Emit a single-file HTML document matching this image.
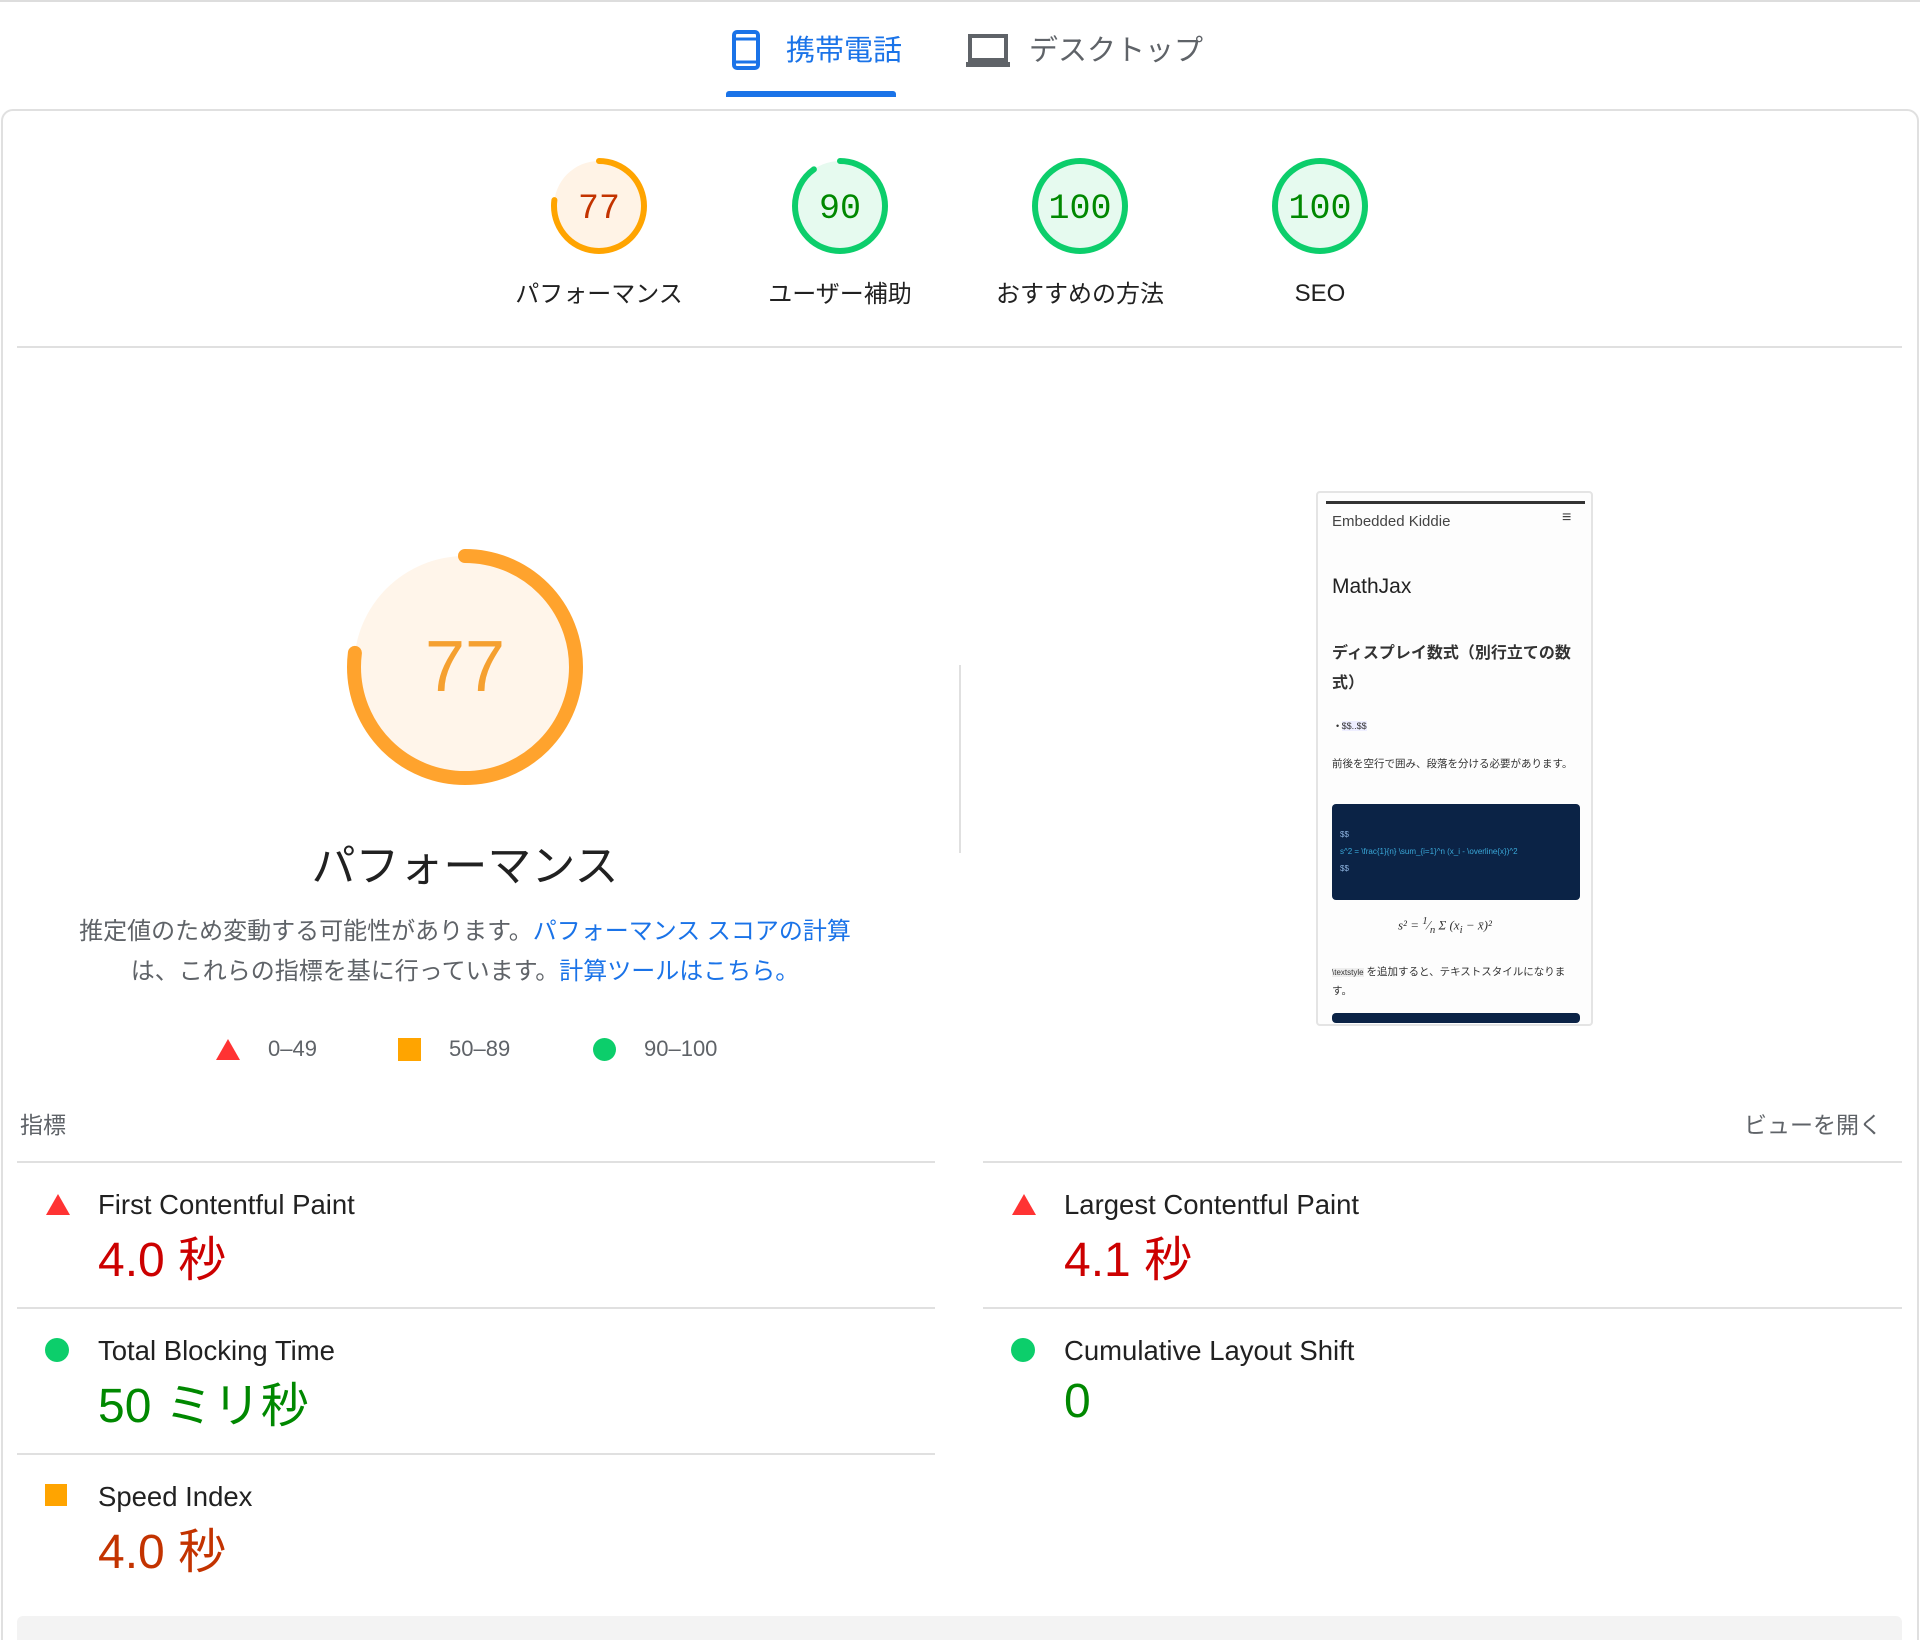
<!DOCTYPE html>
<html style="height:1640px;overflow:hidden"><head><meta charset="utf-8"><style>
*{margin:0;padding:0;box-sizing:border-box}
body{width:1920px;height:1640px;background:#fff;position:relative;overflow:hidden;font-family:"Liberation Sans","Noto Sans CJK JP",sans-serif;color:#212121}
.a{position:absolute;white-space:nowrap}
.c{transform:translateX(-50%)}
</style></head><body>
<div class="a" style="left:0;top:0;width:1920px;height:2px;background:#ddd"></div>
<!-- tabs -->
<svg class="a" style="left:731px;top:29px" width="30" height="42" viewBox="0 0 30 42"><rect x="3" y="3" width="24" height="36" rx="3" fill="none" stroke="#1a73e8" stroke-width="4"/><line x1="3" y1="10" x2="27" y2="10" stroke="#1a73e8" stroke-width="3"/><line x1="3" y1="33" x2="27" y2="33" stroke="#1a73e8" stroke-width="3"/></svg>
<div class="a" style="left:786px;top:27px;font-size:29px;color:#1a73e8">携帯電話</div>
<div class="a" style="left:726px;top:91px;width:170px;height:6px;background:#1a73e8;border-radius:3px 3px 0 0"></div>
<svg class="a" style="left:965px;top:33px" width="46" height="36" viewBox="0 0 46 36"><rect x="5" y="3" width="36" height="24" fill="none" stroke="#5f6368" stroke-width="4"/><rect x="1" y="29" width="44" height="5" fill="#5f6368"/></svg>
<div class="a" style="left:1029px;top:27px;font-size:29px;color:#5f6368">デスクトップ</div>
<!-- card -->
<div class="a" style="left:1px;top:109px;width:1918px;height:1560px;border:2px solid #e0e0e0;border-radius:12px"></div>
<!-- small gauges -->
<svg class="a" style="left:0;top:150px" width="1920" height="120">
<g stroke-width="6" stroke-linecap="round">
<circle cx="599" cy="56" r="45" fill="#fff3e6"/><circle cx="599" cy="56" r="45" fill="none" stroke="#ffa400" stroke-dasharray="217.7 300" transform="rotate(-90 599 56)"/>
<circle cx="840" cy="56" r="45" fill="#e6faef"/><circle cx="840" cy="56" r="45" fill="none" stroke="#0cce6b" stroke-dasharray="254.5 300" transform="rotate(-90 840 56)"/>
<circle cx="1080" cy="56" r="45" fill="#e6faef" stroke="#0cce6b"/>
<circle cx="1320" cy="56" r="45" fill="#e6faef" stroke="#0cce6b"/>
</g>
<g font-family="Liberation Mono,monospace" font-size="35" text-anchor="middle">
<text x="599" y="68" fill="#c33300">77</text><text x="840" y="68" fill="#008800">90</text><text x="1080" y="68" fill="#008800">100</text><text x="1320" y="68" fill="#008800">100</text></g>
</svg>
<div class="a c" style="left:599px;top:274px;font-size:24px">パフォーマンス</div>
<div class="a c" style="left:840px;top:274px;font-size:24px">ユーザー補助</div>
<div class="a c" style="left:1080px;top:274px;font-size:24px">おすすめの方法</div>
<div class="a c" style="left:1320px;top:280px;font-size:24px">SEO</div>
<div class="a" style="left:17px;top:346px;width:1885px;height:2px;background:#e0e0e0"></div>
<!-- big gauge -->
<svg class="a" style="left:335px;top:537px" width="260" height="260">
<circle cx="130" cy="130" r="111" fill="#fff5ea"/>
<circle cx="130" cy="130" r="111" fill="none" stroke="#ffa32d" stroke-width="14" stroke-linecap="round" stroke-dasharray="537 800" transform="rotate(-90 130 130)"/>
<text x="130" y="154" text-anchor="middle" font-family="Liberation Sans,sans-serif" font-size="72" fill="#f5a030">77</text>
</svg>
<div class="a c" style="left:465px;top:830px;font-size:44px">パフォーマンス</div>
<div class="a c" style="left:465px;top:912px;font-size:24px;color:#5f6368;text-align:center;line-height:40px">推定値のため変動する可能性があります。<span style="color:#1a73e8">パフォーマンス スコアの計算</span><br>は、これらの指標を基に行っています。<span style="color:#1a73e8">計算ツールはこちら。</span></div>
<!-- legend -->
<svg class="a" style="left:215px;top:1037px" width="26" height="24"><polygon points="13,2 25,23 1,23" fill="#ff3333"/></svg>
<div class="a" style="left:268px;top:1036px;font-size:22px;color:#5f6368">0–49</div>
<div class="a" style="left:398px;top:1038px;width:23px;height:23px;background:#ffa400"></div>
<div class="a" style="left:449px;top:1036px;font-size:22px;color:#5f6368">50–89</div>
<div class="a" style="left:593px;top:1038px;width:23px;height:23px;border-radius:50%;background:#0cce6b"></div>
<div class="a" style="left:644px;top:1036px;font-size:22px;color:#5f6368">90–100</div>
<div class="a" style="left:959px;top:665px;width:2px;height:188px;background:#e0e0e0"></div>
<!-- screenshot -->
<div class="a" style="left:1316px;top:491px;width:277px;height:535px;border:2px solid #e4e4e4;border-radius:4px;background:#fdfdfd;overflow:hidden">
<div class="a" style="left:8px;top:8px;width:259px;height:3px;background:#333"></div>
<div class="a" style="left:14px;top:20px;font-size:15px;color:#444">Embedded Kiddie</div>
<div class="a" style="left:244px;top:16px;font-size:16px;color:#444">≡</div>
<div class="a" style="left:14px;top:82px;font-size:21px;color:#222">MathJax</div>
<div class="a" style="left:14px;top:146px;font-size:16px;color:#333;font-weight:bold;line-height:30px;white-space:normal;width:250px">ディスプレイ数式（別行立ての数式）</div>
<div class="a" style="left:18px;top:228px;font-size:9px;color:#333">• <span style="background:#eef">$$..$$</span></div>
<div class="a" style="left:14px;top:262px;font-size:10.5px;color:#333;line-height:18px;white-space:normal;width:245px">前後を空行で囲み、段落を分ける必要があります。</div>
<div class="a" style="left:14px;top:311px;width:248px;height:96px;background:#0b2346;border-radius:4px;font-size:8px;color:#8fb4e0;padding:22px 8px;line-height:17px">$$<br><span style="color:#3aa8d8">s^2 = \frac{1}{n} \sum_{i=1}^n (x_i - \overline{x})^2</span><br>$$</div>
<div class="a" style="left:80px;top:422px;font-size:13px;color:#333;font-family:'Liberation Serif',serif;font-style:italic">s² = <sup>1</sup>⁄<sub>n</sub> Σ (x<sub>i</sub> − x̄)²</div>
<div class="a" style="left:14px;top:470px;font-size:10.5px;color:#333;line-height:18px;white-space:normal;width:245px"><span style="background:#eee;font-size:8px">\textstyle</span> を追加すると、テキストスタイルになります。</div>
<div class="a" style="left:14px;top:520px;width:248px;height:10px;background:#0b2346;border-radius:4px"></div>
</div>
<!-- metrics -->
<div class="a" style="left:20px;top:1106px;font-size:23px;color:#5f6368">指標</div>
<div class="a" style="right:38px;top:1106px;font-size:23px;color:#5f6368">ビューを開く</div>
<div class="a" style="left:17px;top:1161px;width:918px;height:2px;background:#e0e0e0"></div>
<div class="a" style="left:983px;top:1161px;width:919px;height:2px;background:#e0e0e0"></div>
<div class="a" style="left:17px;top:1307px;width:918px;height:2px;background:#e0e0e0"></div>
<div class="a" style="left:983px;top:1307px;width:919px;height:2px;background:#e0e0e0"></div>
<div class="a" style="left:17px;top:1453px;width:918px;height:2px;background:#e0e0e0"></div>
<div class="a" style="left:17px;top:1616px;width:1885px;height:30px;background:#f3f3f3;border-radius:6px"></div>

<svg class="a" style="left:45px;top:1192px" width="26" height="24"><polygon points="13,2 25,23 1,23" fill="#ff3333"/></svg>
<div class="a" style="left:98px;top:1189px;font-size:27.5px">First Contentful Paint</div>
<div class="a" style="left:98px;top:1220px;font-size:48px;color:#cc0000">4.0 秒</div>

<svg class="a" style="left:1011px;top:1192px" width="26" height="24"><polygon points="13,2 25,23 1,23" fill="#ff3333"/></svg>
<div class="a" style="left:1064px;top:1189px;font-size:27.5px">Largest Contentful Paint</div>
<div class="a" style="left:1064px;top:1220px;font-size:48px;color:#cc0000">4.1 秒</div>

<div class="a" style="left:45px;top:1338px;width:24px;height:24px;border-radius:50%;background:#0cce6b"></div>
<div class="a" style="left:98px;top:1335px;font-size:27.5px">Total Blocking Time</div>
<div class="a" style="left:98px;top:1366px;font-size:48px;color:#008800">50 ミリ秒</div>

<div class="a" style="left:1011px;top:1338px;width:24px;height:24px;border-radius:50%;background:#0cce6b"></div>
<div class="a" style="left:1064px;top:1335px;font-size:27.5px">Cumulative Layout Shift</div>
<div class="a" style="left:1064px;top:1374px;font-size:48px;color:#008800">0</div>

<div class="a" style="left:45px;top:1484px;width:22px;height:22px;background:#ffa400"></div>
<div class="a" style="left:98px;top:1481px;font-size:27.5px">Speed Index</div>
<div class="a" style="left:98px;top:1512px;font-size:48px;color:#c33300">4.0 秒</div>
</body></html>
